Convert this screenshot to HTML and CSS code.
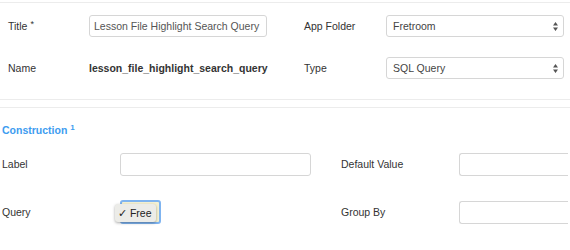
FILE: index.html
```html
<!DOCTYPE html>
<html lang="en">
<head>
    <meta charset="UTF-8">
    <link rel="stylesheet" href="styles.css">
    <title>Query</title>
</head>
<body>
    <div class="general">
        <div class="row">
            <label class="lbl">Title <sup class="req">*</sup></label>
            <input class="field" type="text" value="Lesson File Highlight Search Query">
            <label class="lbl lbl-right">App Folder</label>
            <div class="select">Fretroom
                <svg class="arrows" width="5" height="9" viewBox="0 0 5 9"><path d="M2.5 0L5 3.5H0Z M2.5 9L5 5.5H0Z" fill="#555"/></svg>
            </div>
        </div>
        <div class="row">
            <label class="lbl">Name</label>
            <span class="name">lesson_file_highlight_search_query</span>
            <label class="lbl lbl-right">Type</label>
            <div class="select">SQL Query
                <svg class="arrows" width="5" height="9" viewBox="0 0 5 9"><path d="M2.5 0L5 3.5H0Z M2.5 9L5 5.5H0Z" fill="#555"/></svg>
            </div>
        </div>
    </div>
    <div class="sep"></div>
    <div class="construction">
        <h3>Construction <sup>1</sup></h3>
        <div class="row2">
            <label class="lbl2">Label</label>
            <input class="field2" type="text">
            <label class="lbl3">Default Value</label>
            <input class="field3" type="text">
        </div>
        <div class="row2">
            <label class="lbl2">Query</label>
            <div class="picker">
                <div class="focused"></div>
                <div class="popup">&#10003; Free</div>
            </div>
            <label class="lbl3">Group By</label>
            <input class="field3" type="text">
        </div>
    </div>
</body>
</html>
```

FILE: styles.css
```css
body{
    margin: 0;
    background: #fff;
    font-family: "Liberation Sans", Arial, sans-serif;
    font-size: 10.5px;
    color: #333;
    overflow: hidden;
}
.general{
    margin-top: 2px;
    border-top: 1px solid #ececec;
    border-bottom: 1px solid #ececec;
    padding: 12px 0 20px 8px;
}
.row{
    display: flex;
    align-items: center;
    height: 22px;
    margin-bottom: 20px;
}
.row:last-child{
    margin-bottom: 0;
}
.row > *{
    flex: none;
}
.lbl{
    width: 81px;
}
.lbl-right{
    width: 82px;
    margin-left: 37px;
}
.req{
    font-size: 9px;
    vertical-align: 3px;
    line-height: 0;
}
.field{
    width: 178px;
    height: 22px;
    box-sizing: border-box;
    border: 1px solid #d6d6d6;
    border-radius: 3px;
    padding: 0 4px;
    font-family: inherit;
    font-size: 10.5px;
    color: #555;
}
.name{
    width: 178px;
    font-weight: bold;
    white-space: nowrap;
}
.select{
    width: 178px;
    height: 22px;
    box-sizing: border-box;
    border: 1px solid #d6d6d6;
    border-radius: 3px;
    padding: 0 5px 0 6px;
    display: flex;
    align-items: center;
    justify-content: space-between;
    color: #444;
}
.sep{
    height: 7px;
    border-bottom: 1px solid #ececec;
}
.construction{
    padding-left: 2px;
    overflow: hidden;
}
.construction h3{
    margin: 16px 0 17px;
    color: #3d9cf0;
    font-size: 10.5px;
}
.construction h3 sup{
    font-size: 8px;
    vertical-align: 4px;
    line-height: 0;
}
.row2{
    display: flex;
    align-items: center;
    height: 22px;
    margin-bottom: 26px;
}
.row2 > *{
    flex: none;
}
.lbl2{
    width: 118px;
}
.field2{
    width: 191px;
    height: 23px;
    box-sizing: border-box;
    border: 1px solid #d6d6d6;
    border-radius: 3px;
}
.lbl3{
    width: 118px;
    margin-left: 30px;
}
.field3{
    width: 109px;
    height: 23px;
    box-sizing: border-box;
    border: 1px solid #d6d6d6;
    border-right: none;
    border-radius: 3px 0 0 3px;
}
.picker{
    width: 191px;
    height: 24px;
    position: relative;
}
.focused{
    width: 41px;
    height: 24px;
    box-sizing: border-box;
    border: 2px solid #7fb4f0;
    border-radius: 3px;
    background: #f5f2d4;
}
.popup{
    position: absolute;
    left: -5px;
    top: 4px;
    width: 41px;
    height: 18px;
    box-sizing: border-box;
    background: #ecece8;
    border-radius: 3px;
    box-shadow: 0 1px 3px rgba(0,0,0,0.35);
    font-size: 10.5px;
    line-height: 18px;
    padding-left: 3px;
    color: #222;
}
```
